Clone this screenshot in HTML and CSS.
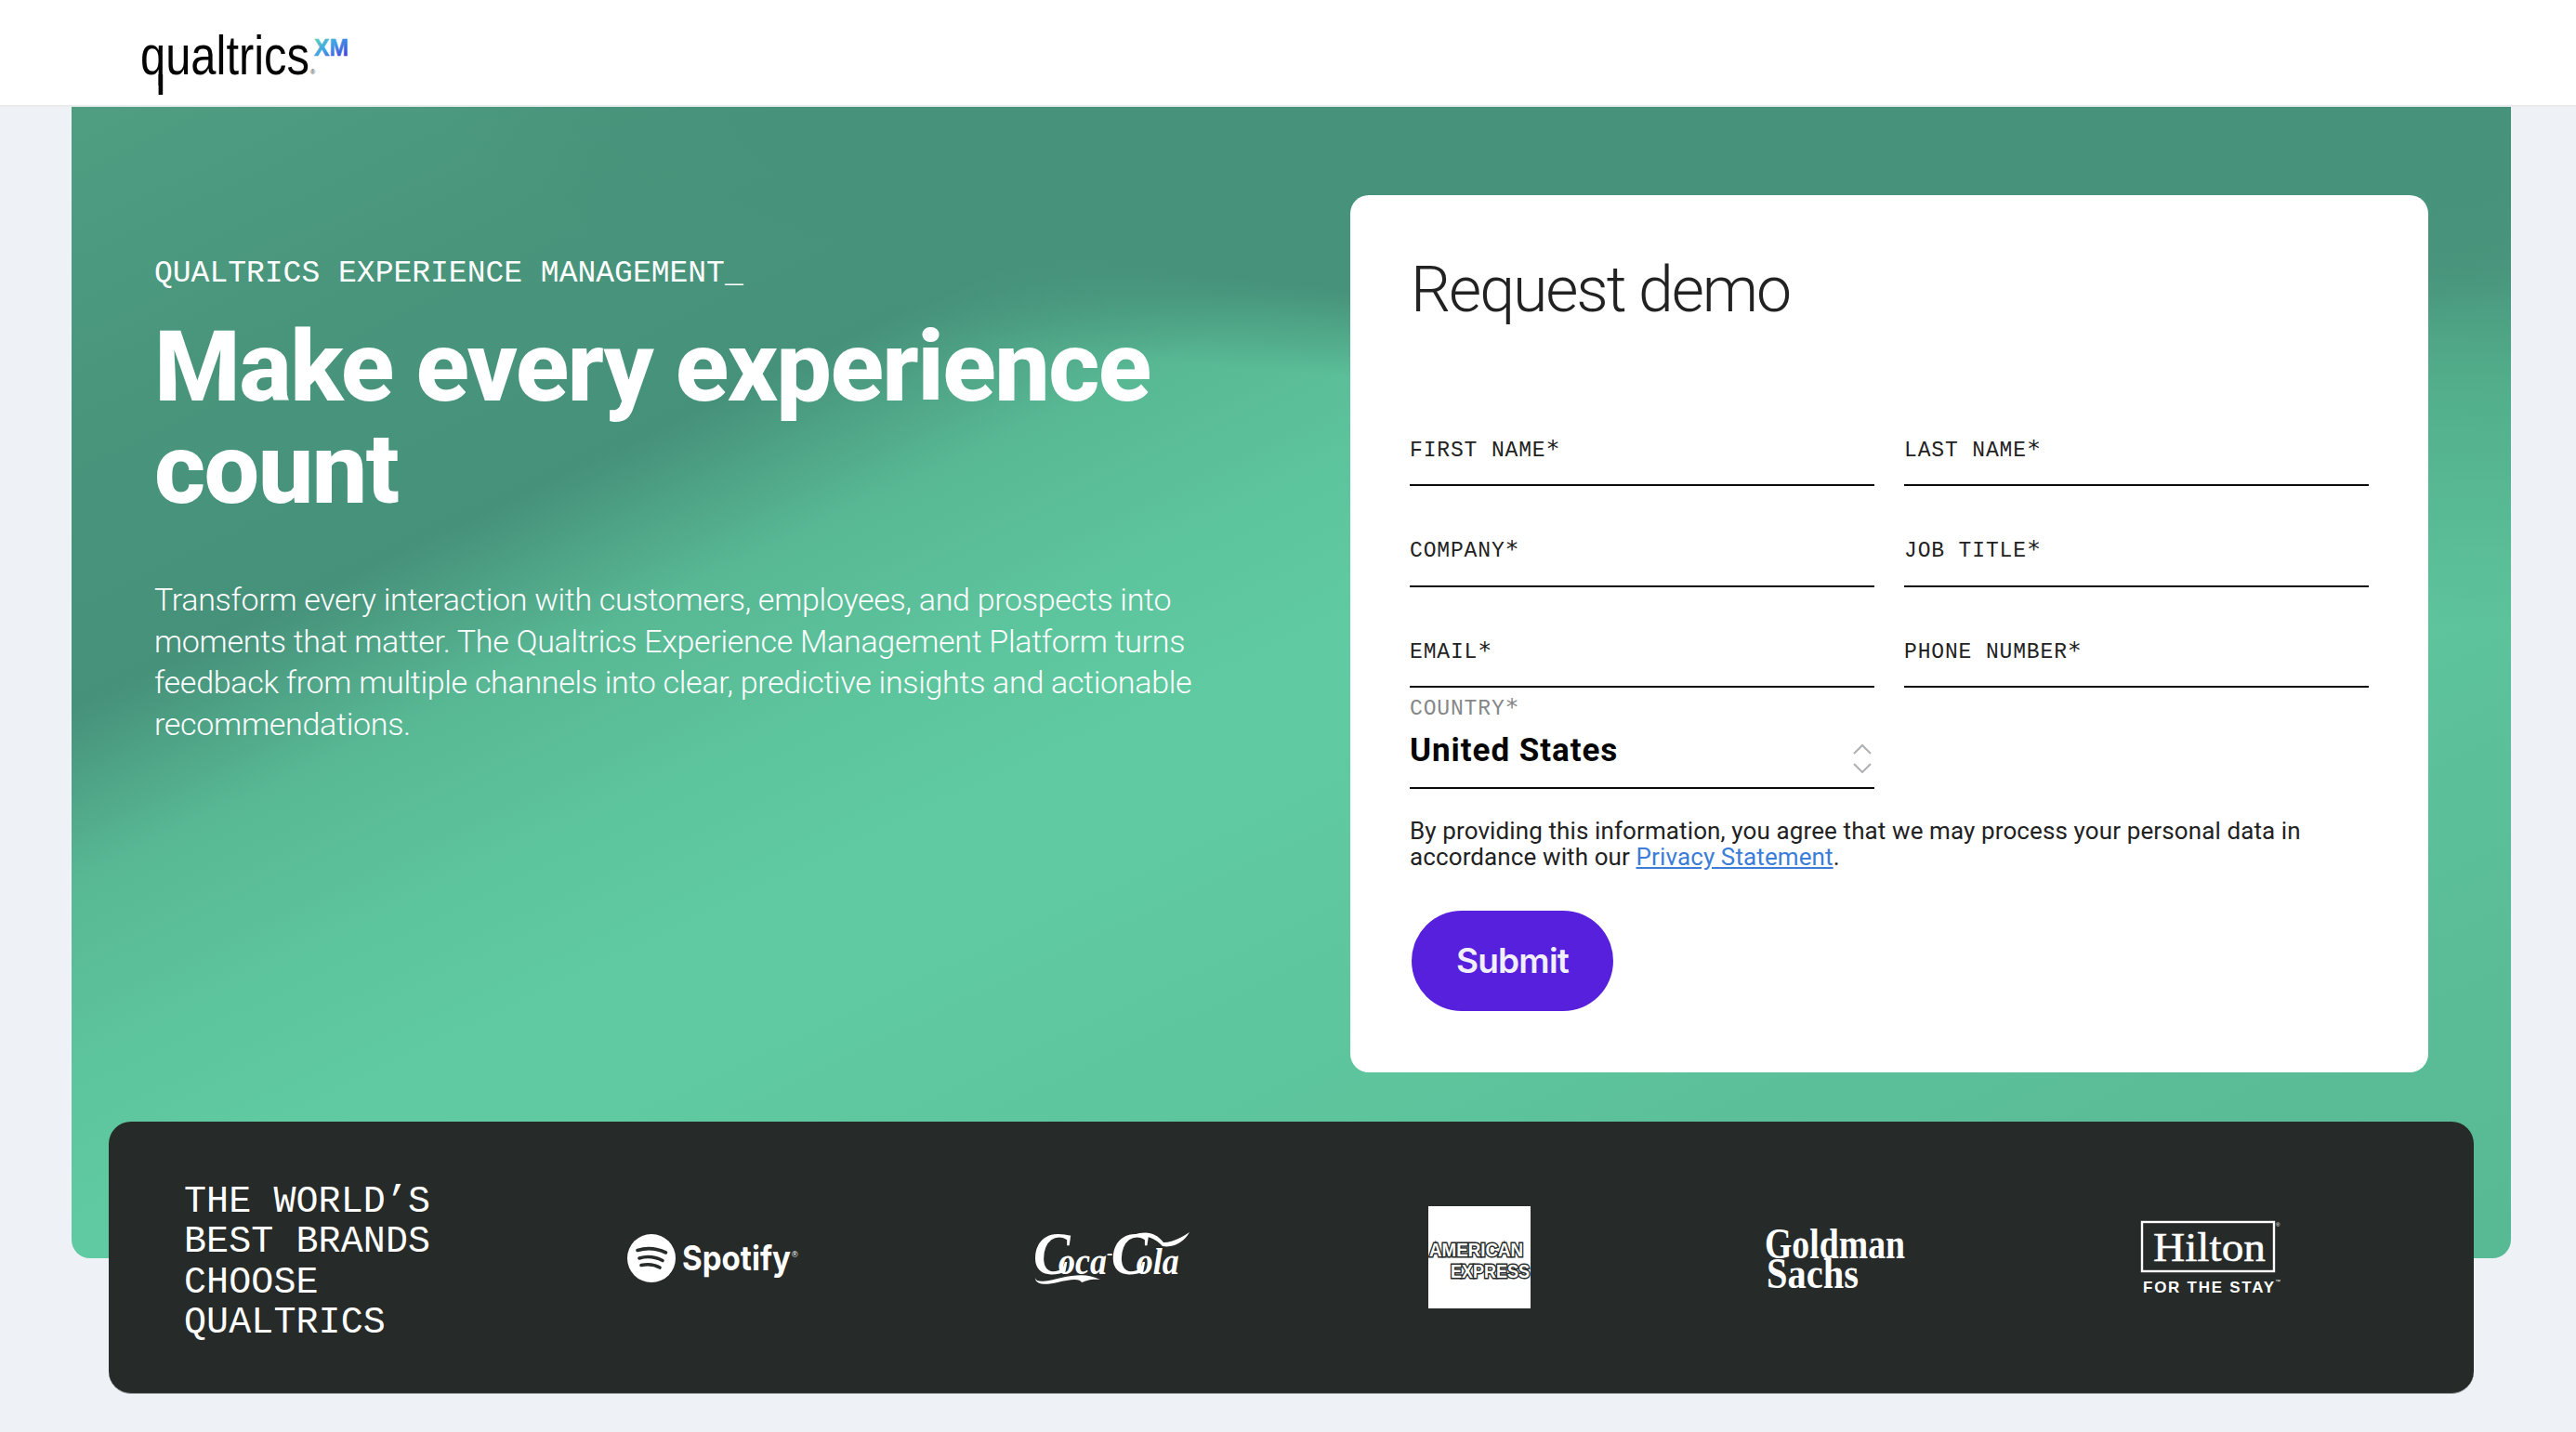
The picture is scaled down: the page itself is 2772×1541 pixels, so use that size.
FILE: index.html
```html
<!DOCTYPE html>
<html lang="en">
<head>
<meta charset="utf-8">
<title>Request demo | Qualtrics XM</title>
<link rel="stylesheet" href="styles.css">
</head>
<body>
<header class="topbar">
  <svg class="brand" width="240" height="84" viewBox="0 0 240 84" role="img" aria-label="qualtrics XM">
    <defs>
      <linearGradient id="xm" x1="0" y1="0" x2="1" y2="1">
        <stop offset="0" stop-color="#5fe0b0"/>
        <stop offset=".45" stop-color="#3fa0e6"/>
        <stop offset="1" stop-color="#4526d8"/>
      </linearGradient>
    </defs>
    <text class="brand-word" x="0" y="58" textLength="182" lengthAdjust="spacingAndGlyphs">qualtrics</text>
    <rect x="19.6" y="58" width="4.6" height="22" fill="#050505"/>
    <text class="brand-reg" x="183" y="58">®</text>
    <text class="brand-xm" x="187" y="38" textLength="37" lengthAdjust="spacingAndGlyphs" fill="url(#xm)" stroke="url(#xm)">XM</text>
  </svg>
</header>

<main>
  <section class="hero">
    <div class="hero-copy">
      <p class="eyebrow">QUALTRICS EXPERIENCE MANAGEMENT_</p>
      <h1 class="headline">Make every experience count</h1>
      <p class="lede">Transform every interaction with customers, employees, and prospects into moments that matter. The Qualtrics Experience Management Platform turns feedback from multiple channels into clear, predictive insights and actionable recommendations.</p>
    </div>
    <form class="card">
      <h2 class="card-title">Request demo</h2>
      <div class="fields">
        <label class="field"><span class="field-label">FIRST NAME<span class="req">*</span></span></label>
        <label class="field"><span class="field-label">LAST NAME<span class="req">*</span></span></label>
        <label class="field"><span class="field-label">COMPANY<span class="req">*</span></span></label>
        <label class="field"><span class="field-label">JOB TITLE<span class="req">*</span></span></label>
        <label class="field"><span class="field-label">EMAIL<span class="req">*</span></span></label>
        <label class="field"><span class="field-label">PHONE NUMBER<span class="req">*</span></span></label>
        <div class="field field-select">
          <span class="field-label muted">COUNTRY<span class="req">*</span></span>
          <div class="select-row">
            <span class="select-value">United States</span>
            <svg class="chevrons" width="20" height="32" viewBox="0 0 20 32" aria-hidden="true">
              <path d="M1 11 L10 2 L19 11 M1 22 L10 31 L19 22" fill="none" stroke="#aeb1b3" stroke-width="2"/>
            </svg>
          </div>
        </div>
      </div>
      <p class="legal">By providing this information, you agree that we may process your personal data in accordance with our <a href="#">Privacy Statement</a>.</p>
      <button class="submit" type="button">Submit</button>
    </form>
  </section>

  <section class="brands">
    <p class="brands-title">THE WORLD’S<br>BEST BRANDS<br>CHOOSE<br>QUALTRICS</p>
    <div class="logos">
      <svg class="logo logo-spotify" width="186" height="54" viewBox="0 0 186 54" role="img" aria-label="Spotify">
        <circle cx="26" cy="27" r="26" fill="#fff"/>
        <path d="M11 18.5 C21 15.5 32 16.5 41.5 21 M13 27 C21 24.5 30 25.5 38 29.5 M15 34.5 C22 33 29 33.5 35 37" fill="none" stroke="#262a29" stroke-width="3.6" stroke-linecap="round"/>
        <text class="spotify-word" x="59" y="40" textLength="117" lengthAdjust="spacingAndGlyphs">Spotify</text>
        <text class="spotify-reg" x="177" y="26">®</text>
      </svg>
      <svg class="logo" width="169" height="56" viewBox="0 0 169 56" role="img" aria-label="Coca-Cola">
        <text class="cc" transform="scale(.9 1)" x="0" y="46"><tspan class="cc-cap">C</tspan><tspan dx="-14">oca</tspan><tspan class="cc-dash" dy="-16">-</tspan><tspan class="cc-cap" dx="-2" dy="16">C</tspan><tspan dx="-14">ola</tspan></text>
        <path d="M2 50 C3 56 14 54 30 50 C48 46 60 46 72 52 C62 51 58 53 52 55 C50 50 38 52 26 55 C14 58 2 58 2 50Z" fill="#fff"/>
        <path d="M108 4 C122 -1 132 2 140 12 C148 12 158 8 168 1 C162 12 150 18 139 16 C132 8 122 4 108 4Z" fill="#fff"/>
      </svg>
      <svg class="logo logo-amex" width="110" height="110" viewBox="0 0 110 110" role="img" aria-label="American Express">
        <rect width="110" height="110" fill="#fff"/>
        <text class="amex" x="1" y="53.5" textLength="101" lengthAdjust="spacingAndGlyphs">AMERICAN</text>
        <text class="amex" x="24" y="76.5" textLength="85" lengthAdjust="spacingAndGlyphs">EXPRESS</text>
      </svg>
      <svg class="logo logo-gs" width="151" height="64" viewBox="0 0 151 64" role="img" aria-label="Goldman Sachs">
        <text class="gs" x="0" y="31" textLength="151" lengthAdjust="spacingAndGlyphs">Goldman</text>
        <text class="gs" x="2" y="63" textLength="99" lengthAdjust="spacingAndGlyphs">Sachs</text>
      </svg>
      <svg class="logo" width="148" height="78" viewBox="0 0 148 78" role="img" aria-label="Hilton for the stay">
        <rect x="1" y="1" width="142" height="53" fill="none" stroke="#fff" stroke-width="2.4"/>
        <text class="hilton" x="13" y="43" textLength="121" lengthAdjust="spacingAndGlyphs">Hilton</text>
        <text class="hilton-mark" x="145" y="6">®</text>
        <text class="hilton-tag" x="2" y="77" textLength="141" lengthAdjust="spacing">FOR THE STAY</text>
        <text class="hilton-mark" x="144" y="67">™</text>
      </svg>
    </div>
  </section>
</main>
</body>
</html>
```
FILE: styles.css
```css
* { box-sizing: border-box; }
html, body { margin: 0; padding: 0; }
body {
  height: 1541px;
  overflow: hidden;
  background: #eef1f5;
  color: #222;
  font-family: Roboto, "Liberation Sans", sans-serif;
}

/* Header */
.topbar {
  height: 115px;
  padding: 22px 0 0 151px;
  background: #fff;
  border-bottom: 2px solid #e9ebec;
}
.brand { display: block; overflow: visible; }
.brand-word { font: 400 60px "Liberation Sans", sans-serif; fill: #050505; }
.brand-reg { font: 400 7px "Liberation Sans", sans-serif; fill: #333; }
.brand-xm { font: 700 25px "Liberation Sans", sans-serif; stroke-width: .5px; }

/* Hero */
.hero {
  display: flex;
  justify-content: space-between;
  align-items: flex-start;
  height: 1239px;
  margin: 0 70px 0 77px;
  padding: 95px 89px 0;
  border-radius: 0 0 20px 20px;
  background:
    radial-gradient(ellipse 1300px 300px at 65% 0, #46927a 70%, rgba(70,146,122,0) 100%),
    linear-gradient(180deg, #46927a 0%, #4a977e 14%, rgba(78,165,132,.75) 24%, rgba(90,189,152,0) 45%) top right / 92px 100% no-repeat,
    linear-gradient(154.5deg, #4f9e82 0%, #48957c 14%, #46917a 26%, #58b894 33.5%, #5dc59d 42%, #60cba2 50%, #5dc49c 70%, #5abd98 85%, #58ba95 100%);
}
.hero-copy { width: 1150px; padding-top: 65px; color: #fff; }
.eyebrow {
  margin: 0;
  font: 400 33px/40px "Liberation Mono", monospace;
}
.headline {
  margin: 25px 0 0;
  width: 1130px;
  font-size: 106px;
  font-weight: 800;
  line-height: 110px;
  letter-spacing: -1.6px;
  color: #fff;
}
.lede {
  margin: 63px 0 0;
  width: 1140px;
  font-size: 34px;
  font-weight: 350;
  line-height: 44.7px;
  letter-spacing: -.3px;
}

/* Form card */
.card {
  width: 1160px;
  height: 944px;
  padding: 60px 64px 0;
  border-radius: 20px;
  background: #fff;
}
.card-title {
  margin: 0;
  padding-left: 1px;
  font-size: 68px;
  font-weight: 300;
  line-height: 84px;
  letter-spacing: -2.1px;
  color: #222;
}
.fields {
  display: grid;
  grid-template-columns: 500px 500px;
  column-gap: 32px;
  margin-top: 61px;
}
.field {
  display: block;
  height: 108.4px;
  padding-top: 55px;
  border-bottom: 2px solid #0b0b0b;
}
.field-label {
  display: block;
  font: 400 23px/30px "Liberation Mono", monospace;
  letter-spacing: .85px;
  color: #222;
}
.req {
  font-family: "DejaVu Sans Mono", monospace;
  font-size: 25px;
  line-height: 0;
  letter-spacing: -.5px;
}
.field-label.muted { color: #858788; }
.field-select { padding-top: 8px; }
.select-row {
  display: flex;
  justify-content: space-between;
  align-items: center;
  padding: 0 3px 0 0;
  margin-top: 6px;
}
.select-value {
  font-size: 35px;
  font-weight: 700;
  line-height: 40px;
  letter-spacing: .95px;
  color: #050505;
}
.chevrons { margin-top: 16px; }
.legal {
  margin: 31px 0 0;
  font-size: 26px;
  line-height: 28.6px;
  letter-spacing: .11px;
  color: #222;
}
.legal a { color: #3b7dd8; text-decoration: underline; }
.submit {
  display: block;
  width: 217px;
  height: 108px;
  margin: 43px 0 0 2px;
  border: 0;
  border-radius: 54px;
  background: #5720dc;
  color: #f1effc;
  font: 600 37px Inter, sans-serif;
  letter-spacing: -.8px;
}

/* Brand strip */
.brands {
  display: flex;
  align-items: center;
  height: 293px;
  margin: -147px 110px 0 117px;
  padding: 0 210px 0 81px;
  border-radius: 24px;
  background: #262a29;
  border-bottom: 1px solid #8d9190;
}
.brands-title {
  margin: 11px 0 0;
  font: 400 40px/43.4px "Liberation Mono", monospace;
  letter-spacing: .1px;
  color: #fff;
}
.logos {
  display: flex;
  align-items: center;
  gap: 254px;
  margin-left: auto;
}
.logo { display: block; flex: none; overflow: visible; }
.logo-spotify { margin: 1px -3px 0 0; }
.logo-amex { margin: 0 -2px 0 2px; }
.logo-gs { margin-top: 3px; }
.spotify-word { font: 700 37px Inter, sans-serif; fill: #fff; }
.spotify-reg { font: 400 9px "Liberation Sans", sans-serif; fill: #fff; }
.cc { font: italic 700 40px "Liberation Serif", serif; fill: #fff; }
.cc-cap { font-size: 66px; }
.cc-dash { font-size: 22px; }
.amex {
  font: 700 20px "Liberation Sans", sans-serif;
  fill: #fff;
  stroke: #262a29;
  stroke-width: 3px;
  paint-order: stroke;
}
.gs { font: 700 46px "Liberation Serif", serif; fill: #fff; }
.hilton { font: 400 44px "Liberation Serif", serif; fill: #fff; stroke: #fff; stroke-width: .5px; }
.hilton-mark { font: 400 6px "Liberation Sans", sans-serif; fill: #fff; }
.hilton-tag { font: 700 17px "Liberation Sans", sans-serif; fill: #fff; }
```
